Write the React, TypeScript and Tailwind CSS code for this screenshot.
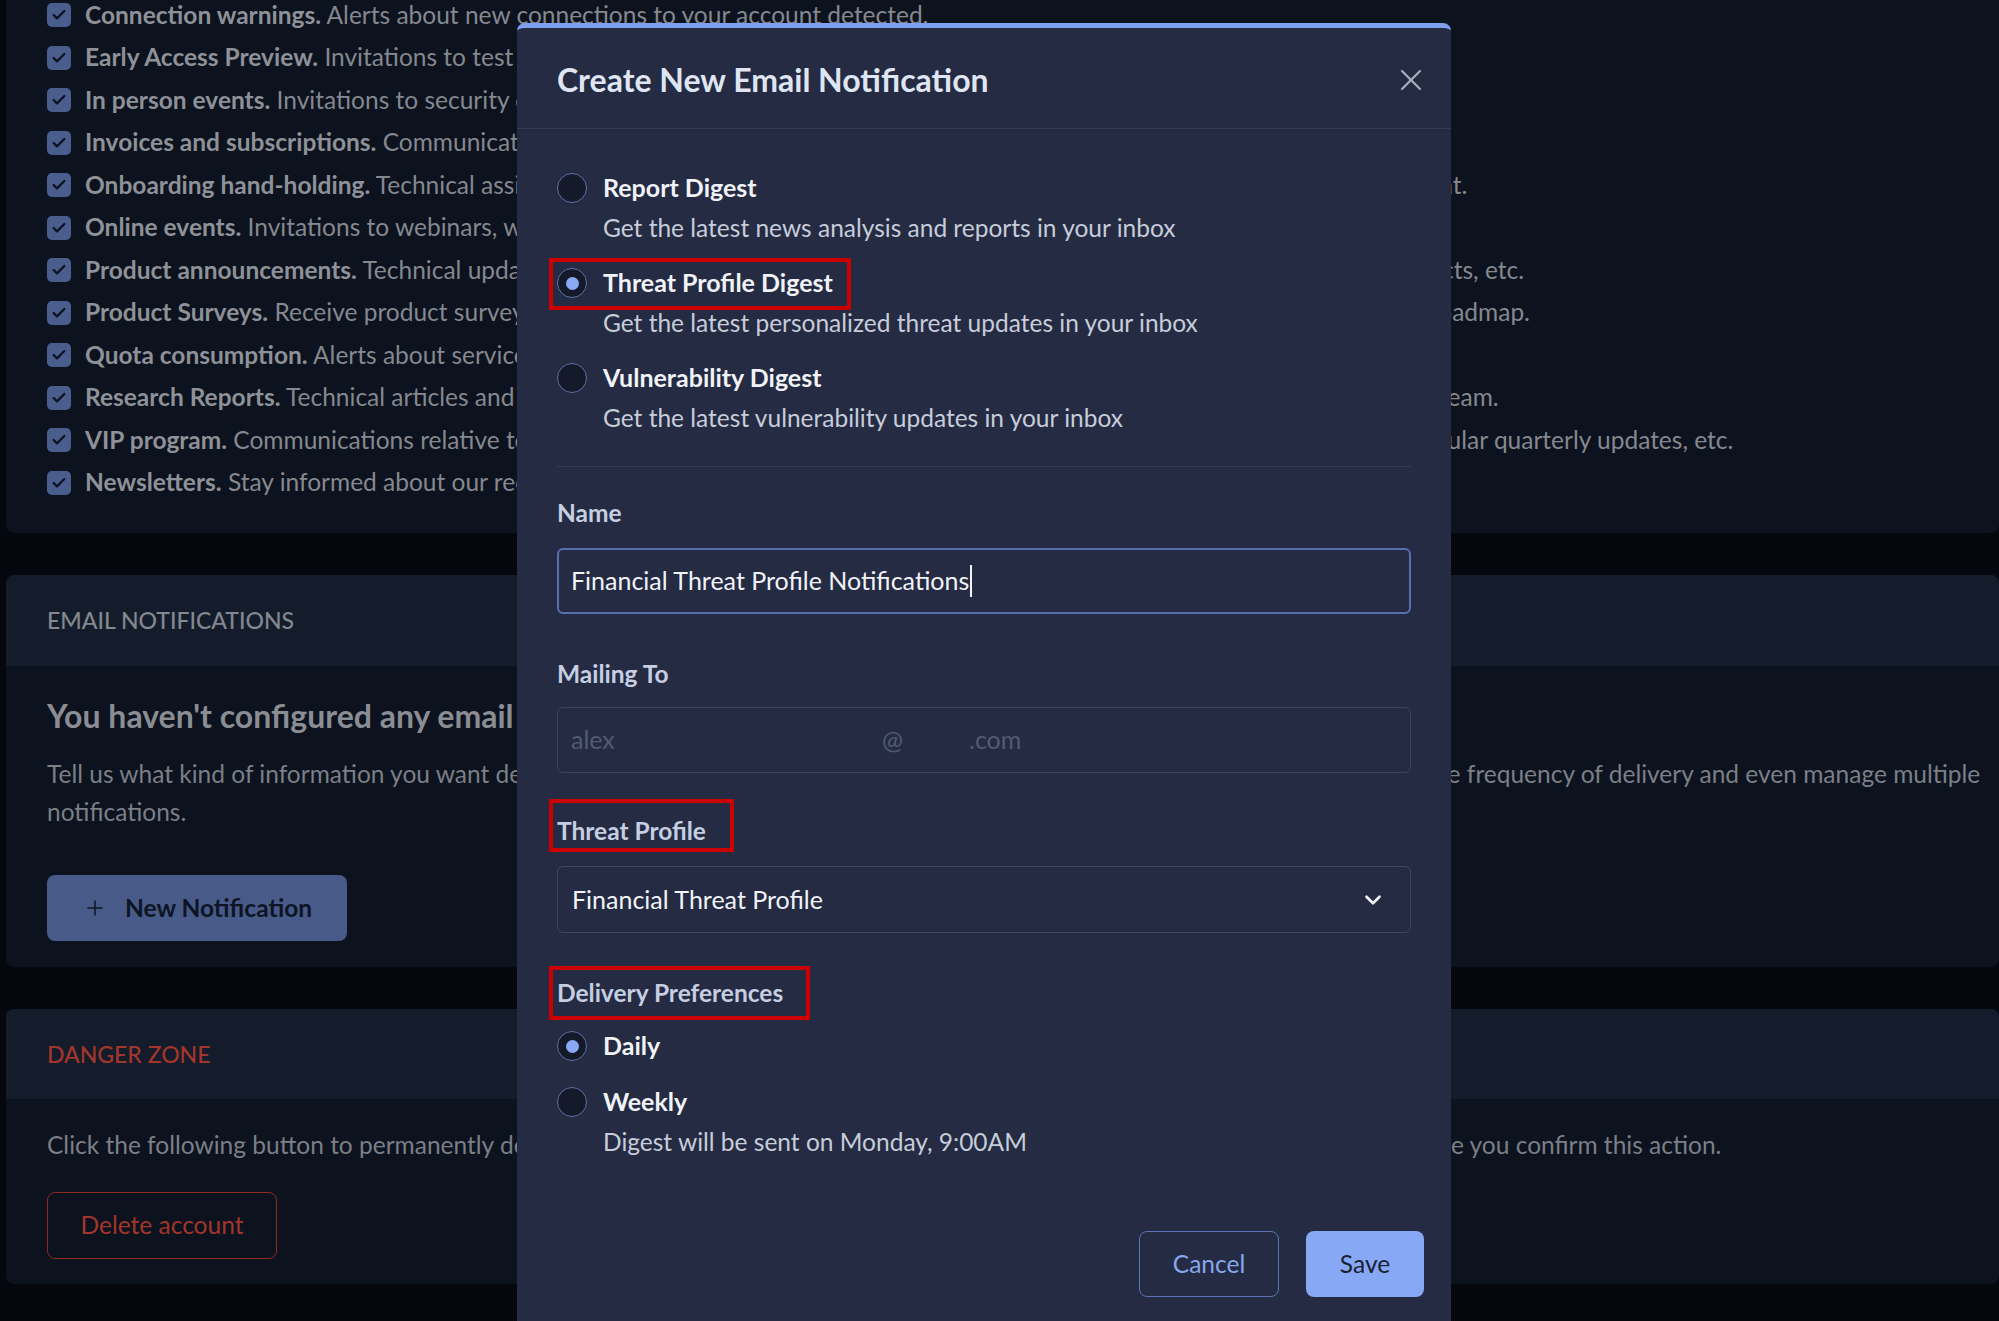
import { Check, ChevronDown, Plus, X } from 'lucide-react';

const prefs: [string, string][] = [
    ['Connection warnings.', 'Alerts about new connections to your account detected.'],
    ['Early Access Preview.', 'Invitations to test new features before they are released.'],
    ['In person events.', 'Invitations to security conferences and events.'],
    ['Invoices and subscriptions.', 'Communications about billing and subscriptions.'],
    ['Onboarding hand-holding.', 'Technical assistance and guidance to help you make the most of the features included in your account.'],
    ['Online events.', 'Invitations to webinars, workshops and online trainings.'],
    ['Product announcements.', 'Technical updates about new features, product releases, integrations, new file parsers and new products, etc.'],
    ['Product Surveys.', 'Receive product surveys and participate in our user research to help us improve and shape the future of our roadmap.'],
    ['Quota consumption.', 'Alerts about service quota consumption.'],
    ['Research Reports.', 'Technical articles and in-depth research reports about the latest threats published by our threat intelligence team.'],
    ['VIP program.', 'Communications relative to the VIP program, such as invitations to exclusive events and also private meetups, regular quarterly updates, etc.'],
    ['Newsletters.', 'Stay informed about our recent news.'],
];

const options: [string, string, boolean][] = [
    ['Report Digest', 'Get the latest news analysis and reports in your inbox', false],
    ['Threat Profile Digest', 'Get the latest personalized threat updates in your inbox', true],
    ['Vulnerability Digest', 'Get the latest vulnerability updates in your inbox', false],
];

function Radio({ checked }: { checked?: boolean }) {
    return (
        <span className="flex h-[30px] w-[30px] shrink-0 items-center justify-center rounded-full border-[1.5px] border-[#5d73a9] bg-[#151a2b]">
            {checked && <span className="h-[13px] w-[13px] rounded-full bg-[#8aa8f4]" />}
        </span>
    );
}

// red annotation boxes drawn over the screenshot
function Highlight({ className }: { className: string }) {
    return <span className={`pointer-events-none absolute border-4 border-[#cc0000] ${className}`} />;
}

export default function App() {
    return (
        <div
            className="relative h-[1321px] w-[1999px] overflow-hidden bg-[#05070f]"
            style={{ fontFamily: 'Lato, "Noto Sans", sans-serif' }}
        >
            {/* page behind the dialog */}
            <div className="flex flex-col gap-[42px] pl-[6px]">
                <div className="-mt-[6px] rounded-b-lg bg-[#0c121e] pb-[29px] pl-[41px]">
                    {prefs.map(([title, text]) => (
                        <div key={title} className="flex h-[42.5px] items-center gap-[14px] whitespace-nowrap text-[24.5px]">
                            <span className="flex h-[24px] w-[24px] shrink-0 items-center justify-center rounded-[5px] bg-[#4a5e8e]">
                                <Check size={16} strokeWidth={3.5} className="text-[#0c1322]" />
                            </span>
                            <span className="text-[#85888e]">
                                <b className="font-bold text-[#8e9197]">{title}</b> {text}
                            </span>
                        </div>
                    ))}
                </div>

                <div className="overflow-hidden rounded-lg bg-[#0c121e]">
                    <div className="flex h-[91px] items-center bg-[#141c2c] pl-[41px] text-[23px] font-medium uppercase text-[#83878e]">
                        Email notifications
                    </div>
                    <div className="pl-[41px] pb-[26px]">
                        <h2 className="mt-[30px] whitespace-nowrap text-[32px] font-bold leading-[40px] text-[#8a8d93]">
                            You haven't configured any email notifications yet
                        </h2>
                        <p className="mt-[19px] whitespace-nowrap text-[24.5px] leading-[38px] text-[#7b7f86]">
                            Tell us what kind of information you want delivered to your inbox, choose the type of content you want to receive, and configure the frequency of delivery and even manage multiple
                            <br />
                            notifications.
                        </p>
                        <button className="mt-[44px] flex h-[66px] w-[300px] items-center gap-[18px] rounded-lg bg-[#475a88] pl-[36px] text-[24.5px] font-bold text-[#0d1424]">
                            <Plus size={24} strokeWidth={1.5} /> New Notification
                        </button>
                    </div>
                </div>

                <div className="overflow-hidden rounded-lg bg-[#0c121e]">
                    <div className="flex h-[90px] items-center bg-[#141c2c] pl-[41px] text-[23px] font-medium uppercase text-[#a3352b]">
                        Danger zone
                    </div>
                    <div className="pl-[41px] pb-[25px]">
                        <p className="mt-[27px] whitespace-nowrap text-[24.5px] leading-[38px] text-[#7b7f86]">
                            Click the following button to permanently delete your account and all its associated data and history. Data cannot be recovered once you confirm this action.
                        </p>
                        <button className="mt-[28px] h-[67px] w-[230px] rounded-lg border-[1.5px] border-[#8a2a23] text-[24.5px] text-[#a3352b]">
                            Delete account
                        </button>
                    </div>
                </div>
            </div>

            {/* dialog */}
            <div className="absolute left-[517px] top-[23px] h-[1320px] w-[934px] rounded-t-lg border-t-[5px] border-[#7f9ff0] bg-[#242b42]">
                <div className="flex h-[101px] items-center justify-between border-b border-[#323b56] pl-10 pr-[22px] pt-[4px]">
                    <h1 className="text-[32px] font-bold text-[#dfe5f3]">Create New Email Notification</h1>
                    <X size={36} strokeWidth={1.4} className="text-[#a9b0c1]" />
                </div>

                <div className="px-10 pt-[39px]">
                    <div className="flex flex-col gap-[15px]">
                        {options.map(([label, desc, checked]) => (
                            <div key={label}>
                                <div className="relative flex h-[40px] w-fit items-center gap-4">
                                    <Radio checked={checked} />
                                    <span className="text-[25px] font-bold text-[#f1f3f8]">{label}</span>
                                    {checked && <Highlight className="-left-[8px] -right-[18px] -top-[5px] -bottom-[7px]" />}
                                </div>
                                <p className="h-[40px] pl-[46px] text-[24.5px] leading-[40px] text-[#c7cdda]">{desc}</p>
                            </div>
                        ))}
                    </div>

                    <div className="mt-[28px] border-t border-[#323b56]" />

                    <label className="mt-[26px] block h-[40px] text-[24.5px] font-bold leading-[40px] text-[#c6cee2]">Name</label>
                    <div className="mt-[15px] flex h-[66px] items-center rounded-md border-2 border-[#5670b0] px-[12px] text-[25px] text-[#f1f3f8]">
                        Financial Threat Profile Notifications
                        <span className="ml-[1px] h-[32px] w-[2px] bg-[#f1f3f8]" />
                    </div>

                    <label className="mt-[40px] block h-[40px] text-[24.5px] font-bold leading-[40px] text-[#c6cee2]">Mailing To</label>
                    <div className="mt-[13px] flex h-[66px] items-center rounded-md border border-[#3a4460] px-[13px] text-[25px] text-[#525b73]">
                        <span className="w-[311px]">alex</span>
                        <span className="w-[87px]">@</span>
                        <span>.com</span>
                    </div>

                    <div className="relative mt-[38px] w-fit">
                        <label className="block h-[40px] text-[24.5px] font-bold leading-[40px] text-[#c6cee2]">Threat Profile</label>
                        <Highlight className="-left-[8px] -right-[28px] -top-[12px] -bottom-[1px]" />
                    </div>
                    <div className="mt-[15px] flex h-[67px] items-center justify-between rounded-md border-[1.5px] border-[#3d4866] pl-[14px] pr-[24px] text-[25px] text-[#f1f3f8]">
                        Financial Threat Profile
                        <ChevronDown size={26} strokeWidth={2.5} />
                    </div>

                    <div className="relative mt-[40px] w-fit">
                        <label className="block h-[40px] text-[24.5px] font-bold leading-[40px] text-[#c6cee2]">Delivery Preferences</label>
                        <Highlight className="-left-[8px] -right-[27px] -top-[7px] -bottom-[7px]" />
                    </div>
                    <div className="mt-[13px] flex h-[40px] items-center gap-4">
                        <Radio checked />
                        <span className="text-[25px] font-bold text-[#f1f3f8]">Daily</span>
                    </div>
                    <div className="mt-[16px] flex h-[40px] items-center gap-4">
                        <Radio />
                        <span className="text-[25px] font-bold text-[#f1f3f8]">Weekly</span>
                    </div>
                    <p className="h-[40px] pl-[46px] text-[24.5px] leading-[40px] text-[#c7cdda]">Digest will be sent on Monday, 9:00AM</p>
                </div>

                <div className="mt-[69px] flex justify-end gap-[27px] pr-[27px]">
                    <button className="h-[66px] w-[140px] rounded-lg border-[1.5px] border-[#5b73b3] text-[24.5px] text-[#88a7ef]">
                        Cancel
                    </button>
                    <button className="h-[66px] w-[118px] rounded-lg bg-[#86a8f5] text-[24.5px] text-[#1b2134]">
                        Save
                    </button>
                </div>
            </div>
        </div>
    );
}
